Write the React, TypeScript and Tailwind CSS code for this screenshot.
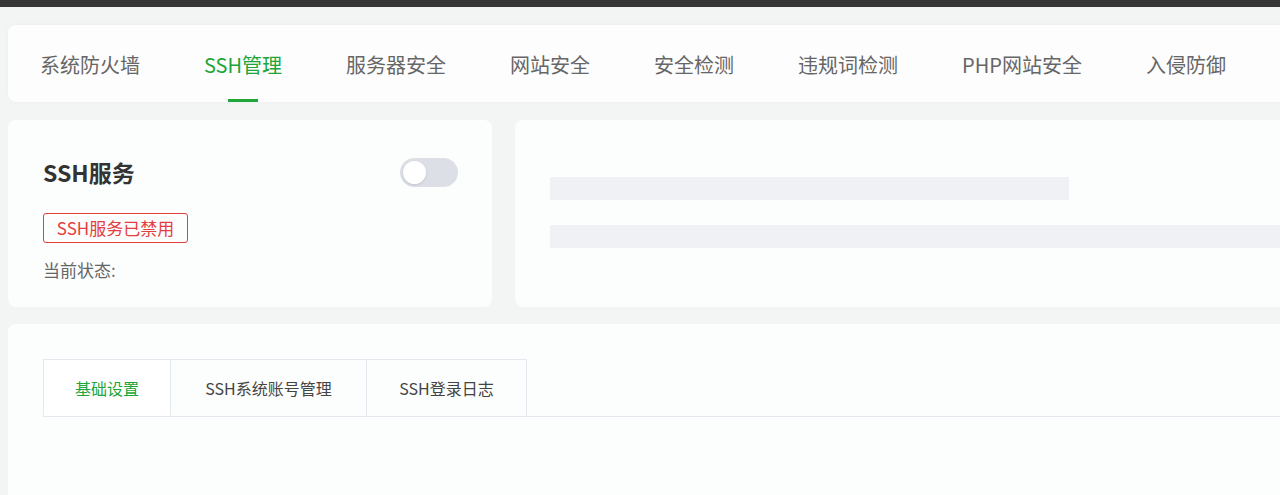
import React from "react";

// ---------------------------------------------------------------------------
// Top navigation tabs
// ---------------------------------------------------------------------------

const NAV_TABS = [
  "系统防火墙",
  "SSH管理",
  "服务器安全",
  "网站安全",
  "安全检测",
  "违规词检测",
  "PHP网站安全",
  "入侵防御",
];

const SUB_TABS = [
  { label: "基础设置", width: "w-[128px]" },
  { label: "SSH系统账号管理", width: "w-[196px]" },
  { label: "SSH登录日志", width: "w-[160px]" },
];

const FONT = {
  fontFamily:
    '"Microsoft YaHei", "Noto Sans CJK SC", "Noto Sans", sans-serif',
};

function NavBar({ active }: { active: number }) {
  return (
    <div className="flex h-[77px] items-stretch rounded-lg bg-[#fdfdfd] shadow-[0_0_6px_rgba(0,0,0,0.03)]">
      {NAV_TABS.map((t, i) => (
        <div
          key={t}
          className={`relative flex items-center px-[32px] pt-[2px] text-[20px] ${
            i === active ? "text-[#20a53a]" : "text-[#666]"
          }`}
        >
          {t}
          {i === active && (
            <span className="absolute bottom-0 left-1/2 h-[3px] w-[30px] -translate-x-1/2 bg-[#20a53a]" />
          )}
        </div>
      ))}
    </div>
  );
}

// ---------------------------------------------------------------------------
// Toggle (off state)
// ---------------------------------------------------------------------------

function Toggle() {
  return (
    <div className="flex h-[29px] w-[58px] items-center rounded-full bg-[#dcdfe6] px-[3px]">
      <span className="h-[23px] w-[23px] rounded-full bg-white shadow-sm" />
    </div>
  );
}

// ---------------------------------------------------------------------------
// Main component
// ---------------------------------------------------------------------------

export default function App() {
  return (
    <div
      className="h-[495px] w-[1280px] overflow-hidden bg-[#f3f4f4]"
      style={FONT}
    >
      <div className="h-[7px] bg-[#363636]" />

      <div className="w-[1320px] pl-2 pt-[18px]">
        <NavBar active={1} />

        {/* ── Status + skeleton ─────────────────────────────────────── */}
        <div className="mt-[18px] flex gap-[23px]">
          <div className="h-[187px] w-[484px] rounded-lg bg-[#fcfdfd] pl-[35px] pr-[34px] pt-[38px]">
            <div className="flex h-[29px] items-center justify-between">
              <span className="text-[23px] font-bold text-[#333]">SSH服务</span>
              <Toggle />
            </div>
            <div className="mt-[26px] flex h-[30px] w-[145px] items-center justify-center rounded-[3px] border border-[#e53e3e] text-[17px] text-[#e53e3e]">
              SSH服务已禁用
            </div>
            <div className="mt-[15px] text-[17px] leading-6 text-[#666]">
              当前状态:
            </div>
          </div>

          <div className="h-[187px] flex-1 rounded-lg bg-[#fcfdfd] pl-[35px] pt-[57px]">
            <div className="h-[23px] w-[519px] bg-[#f0f1f5]" />
            <div className="mt-[25px] h-[23px] w-full bg-[#f0f1f5]" />
          </div>
        </div>

        {/* ── Settings tabs ─────────────────────────────────────────── */}
        <div className="mt-[17px] h-[200px] rounded-lg bg-[#fcfdfd] pl-[35px] pt-[35px]">
          <div className="flex border-b border-[#e4e7ed]">
            {SUB_TABS.map((t, i) => (
              <div
                key={t.label}
                className={`flex h-[57px] items-center justify-center border-r border-t border-[#e4e7ed] text-[16px] ${t.width} ${
                  i === 0
                    ? "-mb-px border-l border-b border-b-white bg-white text-[#20a53a]"
                    : "text-[#444]"
                }`}
              >
                {t.label}
              </div>
            ))}
          </div>
        </div>
      </div>
    </div>
  );
}
